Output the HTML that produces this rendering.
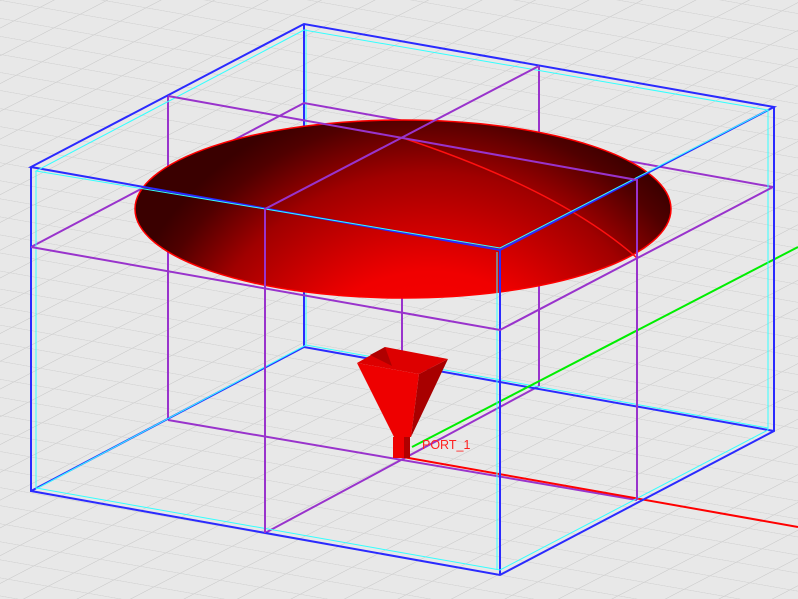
<!DOCTYPE html>
<html><head><meta charset="utf-8"><style>
html,body{margin:0;padding:0;background:#e8e8e8;}
svg{display:block}
</style></head><body>
<svg width="798" height="599" viewBox="0 0 798 599" xmlns="http://www.w3.org/2000/svg">
<defs>
<pattern id="g" patternUnits="userSpaceOnUse" width="1" height="1" patternTransform="matrix(40,7,-26,13.5,0,0)">
<rect width="1" height="1" fill="#e8e8e8"/>
<path d="M0 0H1M0 0V1" stroke="#cdcdcd" stroke-width="0.05" fill="none"/>
</pattern>
<radialGradient id="dome" gradientUnits="userSpaceOnUse" cx="430" cy="420" r="330">
<stop offset="0" stop-color="#ff0000"/>
<stop offset="0.45" stop-color="#f00000"/>
<stop offset="0.75" stop-color="#a00000"/>
<stop offset="0.92" stop-color="#500000"/>
<stop offset="1" stop-color="#3a0000"/>
</radialGradient>
</defs>
<rect width="798" height="599" fill="url(#g)"/>
<g fill="none" stroke-width="2">
<path d="M304 24V347" stroke="#2a2aff"/>
<path d="M306 29V345" stroke="#33ffff" stroke-width="1"/>
<path d="M539 66V386M168 96V420" stroke="#9933cc"/>
<path d="M31 247L304 103L773 187" stroke="#9933cc"/>
<path d="M168 420L637 500M539 386L265 533" stroke="#9933cc"/>
<path d="M31 491L304 347L774 431" stroke="#2a2aff"/>
<path d="M36 489L306 345L768 428" stroke="#33ffff" stroke-width="1"/>
<path d="M402 290V365" stroke="#9933cc"/>
<path d="M403 457L798 527" stroke="#ff0000"/>
<path d="M412 447L798 247" stroke="#00ee00"/>
</g>
<ellipse cx="403" cy="209" rx="268" ry="89" fill="url(#dome)" stroke="#ff0000" stroke-width="1.5"/>
<path d="M403 138Q560 190 637 258" stroke="#ff1010" stroke-width="1.5" fill="none"/>
<polygon points="357,363 419,374 411,437 394,437" fill="#ee0000"/>
<polygon points="419,374 448,359 411,437" fill="#a80000"/>
<polygon points="357,363 385,347 448,359 419,374" fill="#dd0000"/>
<polygon points="370,355 385,347 392,366" fill="#b00000"/>
<rect x="393" y="437" width="17" height="21" fill="#ee0000"/>
<rect x="404" y="437" width="6" height="21" fill="#b00000"/>
<text x="422" y="449" font-family="Liberation Sans, sans-serif" font-size="12.5" fill="#ff2020">PORT_1</text>
<g fill="none" stroke-width="2">
<path d="M304 24L31 167L500 250L774 107Z" stroke="#2a2aff"/>
<path d="M304 30L36 171L500 248L768 110Z" stroke="#33ffff" stroke-width="1"/>
<path d="M31 167V491L500 575L774 431V107M500 250V575" stroke="#2a2aff"/>
<path d="M36 171V488L500 570L768 430V110M497 252V570" stroke="#33ffff" stroke-width="1"/>
<path d="M168 96L637 180V500M539 66L265 209V533" stroke="#9933cc"/>
<path d="M31 247L500 330L773 187" stroke="#9933cc"/>
</g>
</svg>
</body></html>
